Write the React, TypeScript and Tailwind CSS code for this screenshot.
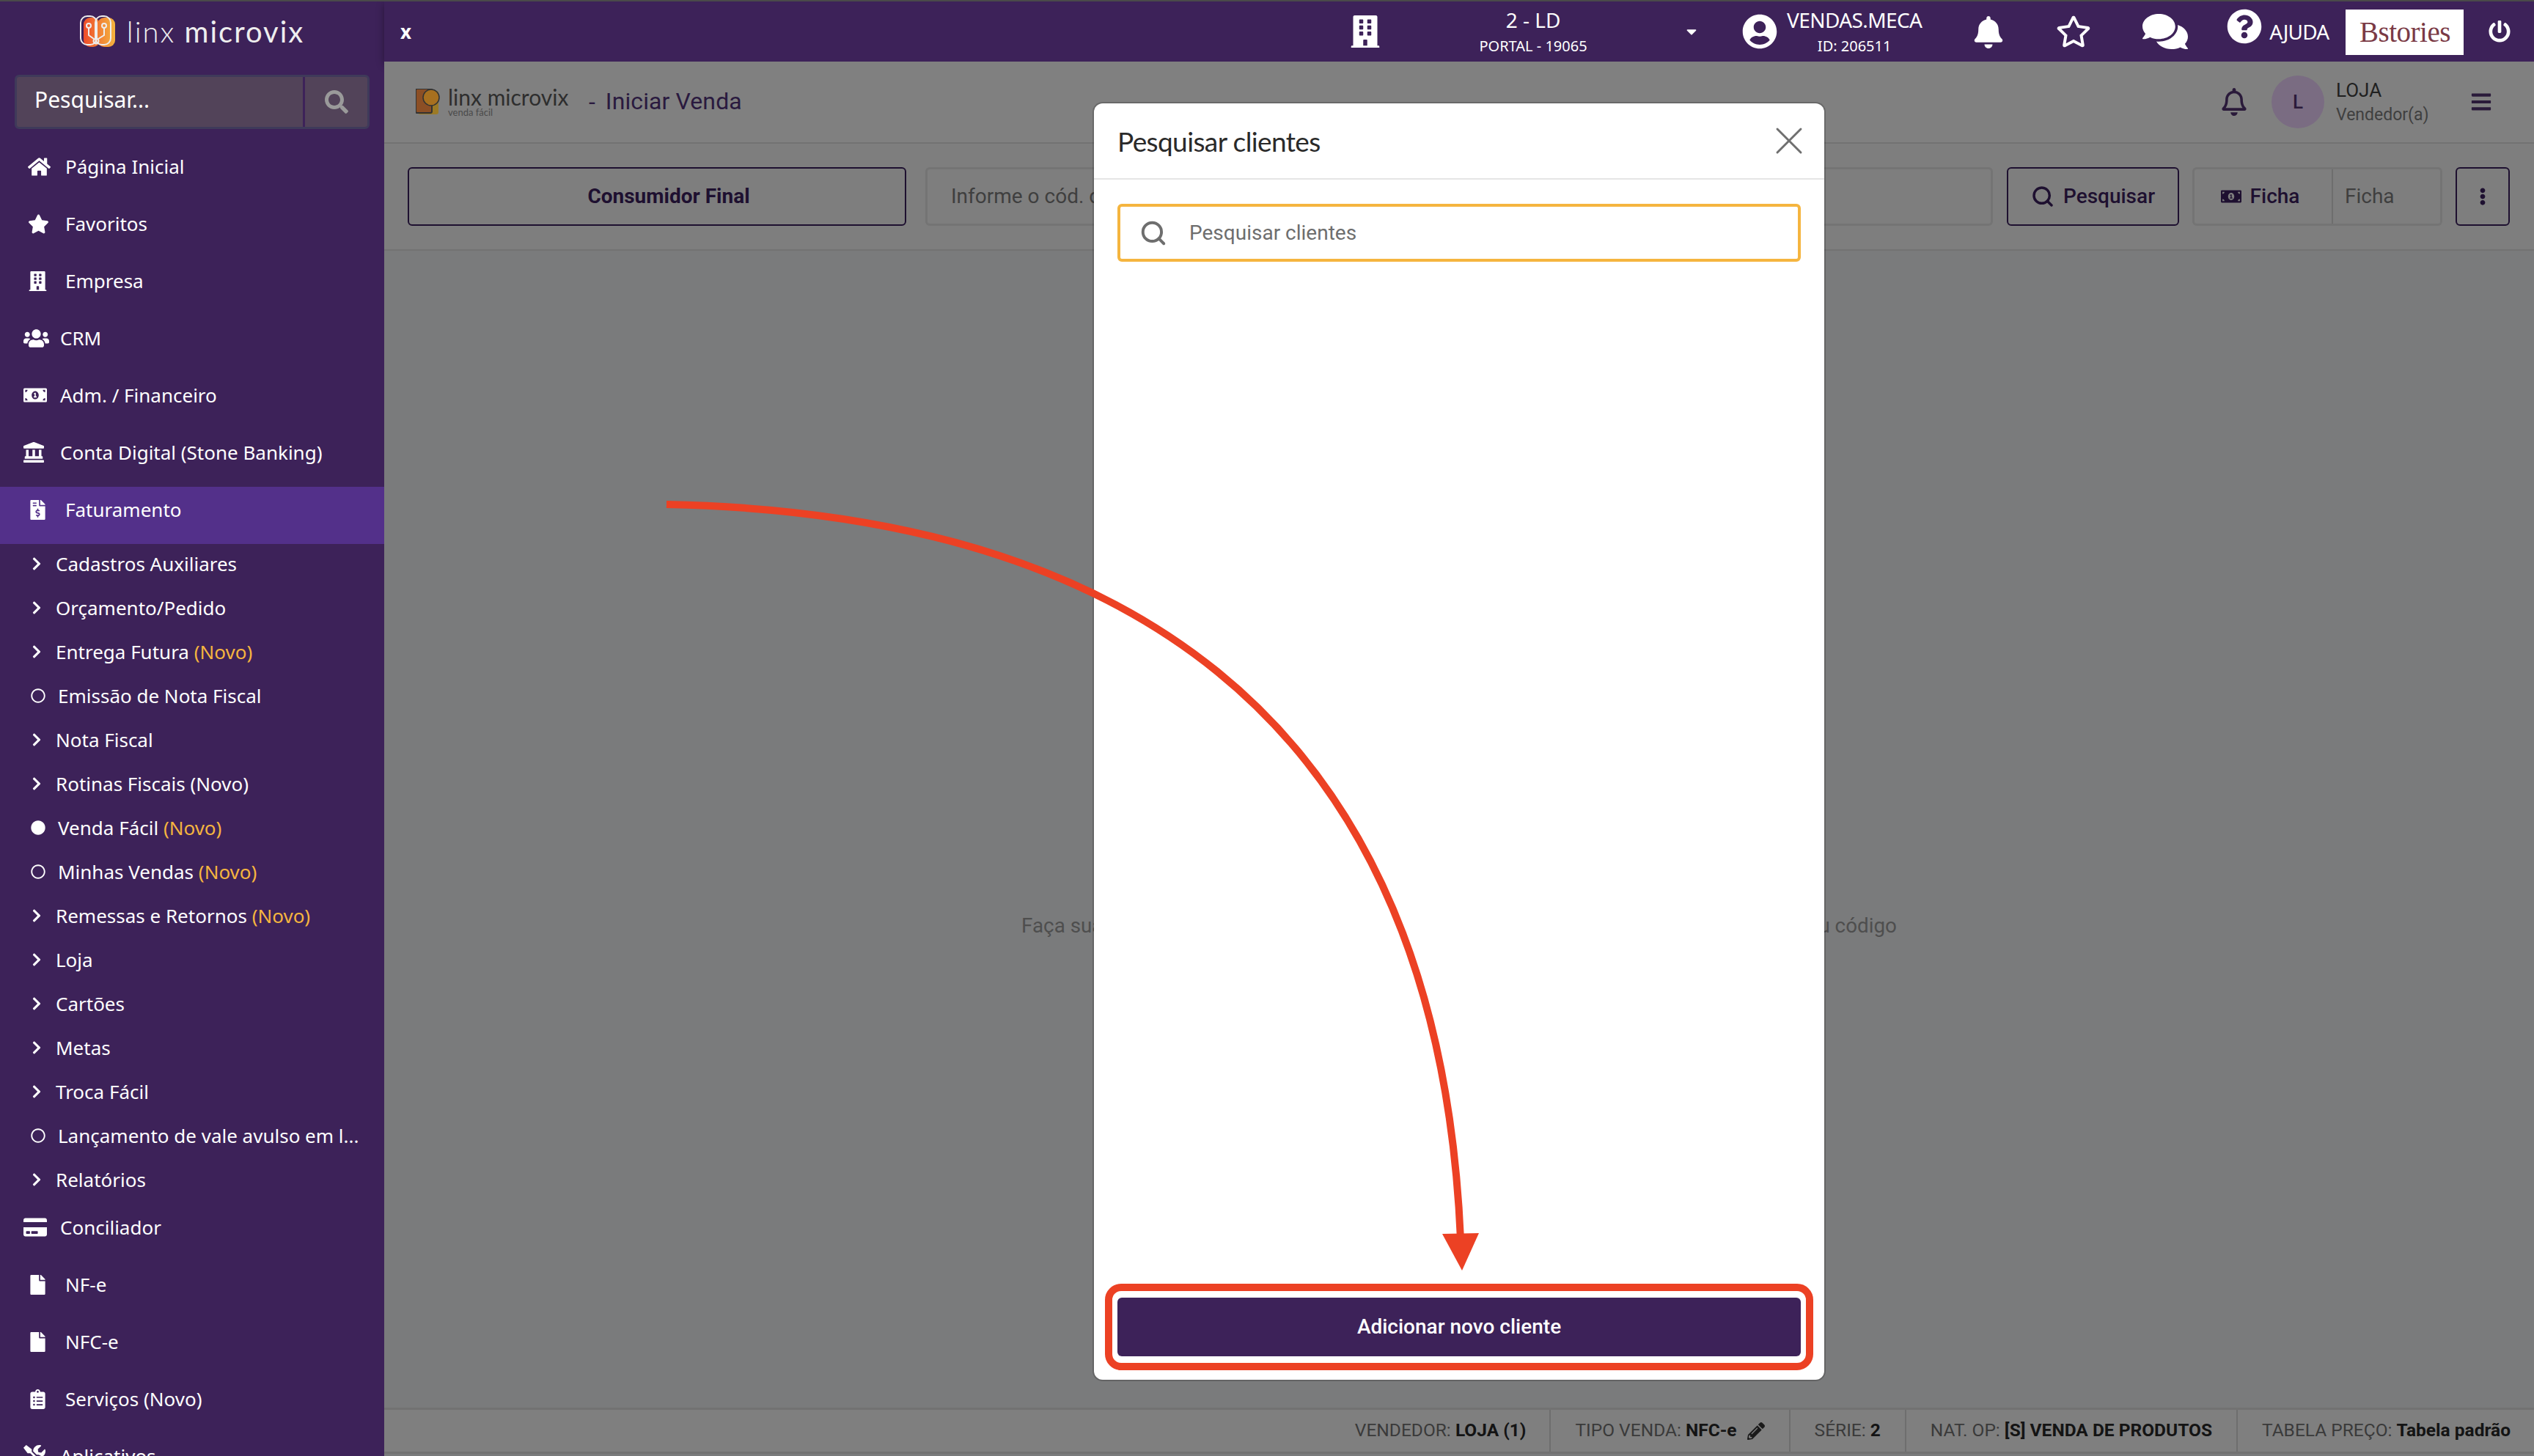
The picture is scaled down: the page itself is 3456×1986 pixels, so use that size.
import {
    FaBell,
    FaBuilding,
    FaChevronRight,
    FaClipboardList,
    FaCreditCard,
    FaFile,
    FaFileInvoiceDollar,
    FaHome,
    FaLandmark,
    FaMoneyBillAlt,
    FaPencilAlt,
    FaRegBell,
    FaRegCircle,
    FaCircle,
    FaRegStar,
    FaSearch,
    FaStar,
    FaTools,
    FaUserCircle,
    FaUsers,
    FaComments,
    FaQuestionCircle,
    FaPowerOff,
    FaCaretDown,
    FaBars,
    FaEllipsisV,
} from 'react-icons/fa'
import { LuSearch, LuX } from 'react-icons/lu'

const sideFont = "font-['Noto_Sans',sans-serif]"

const subItems = [
    { label: 'Cadastros Auxiliares', type: 'arrow' },
    { label: 'Orçamento/Pedido', type: 'arrow' },
    { label: 'Entrega Futura', type: 'arrow', novo: true },
    { label: 'Emissão de Nota Fiscal', type: 'ring' },
    { label: 'Nota Fiscal', type: 'arrow' },
    { label: 'Rotinas Fiscais (Novo)', type: 'arrow' },
    { label: 'Venda Fácil', type: 'dot', novo: true },
    { label: 'Minhas Vendas', type: 'ring', novo: true },
    { label: 'Remessas e Retornos', type: 'arrow', novo: true },
    { label: 'Loja', type: 'arrow' },
    { label: 'Cartões', type: 'arrow' },
    { label: 'Metas', type: 'arrow' },
    { label: 'Troca Fácil', type: 'arrow' },
    { label: 'Lançamento de vale avulso em l...', type: 'ring' },
    { label: 'Relatórios', type: 'arrow' },
]

function MainItem({ icon, label, wide, active }: any) {
    return (
        <div
            className={`flex h-[78px] items-start text-[26px] leading-[36px] text-white ${
                wide ? 'pl-[32px]' : 'pl-[38px]'
            } ${active ? 'mt-[4px] mb-[-3px] bg-[#53308a] pt-[13px]' : 'pt-[17px]'}`}
        >
            <span
                className={`flex h-[36px] items-center ${
                    wide ? 'w-[50px]' : 'w-[51px]'
                }`}
            >
                {icon}
            </span>
            {label}
        </div>
    )
}

function SubItem({ item }: any) {
    return (
        <div className="flex h-[60px] items-center pl-[40px] text-[26px] text-white">
            {item.type === 'arrow' && (
                <span className="flex w-[36px]">
                    <FaChevronRight size={20} />
                </span>
            )}
            {item.type === 'ring' && (
                <span className="ml-[2px] flex w-[37px]">
                    <FaRegCircle size={20} />
                </span>
            )}
            {item.type === 'dot' && (
                <span className="ml-[2px] flex w-[37px]">
                    <FaCircle size={20} />
                </span>
            )}
            <span className="whitespace-nowrap">
                {item.label}
                {item.novo && (
                    <span className="text-[#f5b53f]"> (Novo)</span>
                )}
            </span>
        </div>
    )
}

function Sidebar() {
    return (
        <aside
            className={`h-full w-[524px] shrink-0 overflow-hidden bg-[#3d2259] ${sideFont}`}
        >
            <div className="flex h-[82px] items-center justify-center gap-[16px]">
                <svg width="48" height="44" viewBox="0 0 48 44">
                    <defs>
                        <linearGradient id="lg" gradientUnits="userSpaceOnUse" x1="4" y1="0" x2="48" y2="0">
                            <stop offset="0" stopColor="#ee4a2a" />
                            <stop offset="1" stopColor="#f5b53f" />
                        </linearGradient>
                    </defs>
                    <rect x="5" y="3" width="22" height="40" rx="9" fill="url(#lg)" />
                    <rect x="24" y="3" width="24" height="40" rx="9" fill="url(#lg)" />
                    <g fill="none" stroke="#eee" strokeWidth="2">
                        <rect x="1" y="1" width="22" height="39" rx="9" />
                        <rect x="21" y="1" width="21" height="39" rx="9" />
                        <circle cx="12" cy="14" r="3" />
                        <circle cx="33" cy="14" r="3" />
                        <circle cx="22" cy="35" r="3.5" />
                        <path d="M12 17v10l7 5M33 17v10l-8 5" />
                    </g>
                </svg>
                <span className="text-[40px] leading-none tracking-[2px] text-[#eeeeee] font-['Lato',sans-serif]">
                    <span className="font-light">linx</span>{' '}
                    <span>microvix</span>
                </span>
            </div>
            <div className="mx-[20px] mt-[18px] flex h-[74px] rounded-[6px] border-[3px] border-[#3f3a5a] bg-[#524359]">
                <div className="flex w-[393px] items-center border-r-[3px] border-[#3d2259] pb-[8px] pl-[24px] text-[30px] text-white">
                    Pesquisar...
                </div>
                <div className="flex flex-1 items-center justify-center text-[#9a9a9a]">
                    <FaSearch size={32} />
                </div>
            </div>
            <div className="mt-[16px]">
                <MainItem icon={<FaHome size={31} />} label="Página Inicial" />
                <MainItem icon={<FaStar size={29} />} label="Favoritos" />
                <MainItem icon={<FaBuilding size={27} />} label="Empresa" />
                <MainItem icon={<FaUsers size={35} />} label="CRM" wide />
                <MainItem
                    icon={<FaMoneyBillAlt size={32} />}
                    label="Adm. / Financeiro"
                    wide
                />
                <MainItem
                    icon={<FaLandmark size={28} />}
                    label="Conta Digital (Stone Banking)"
                    wide
                />
                <MainItem
                    icon={<FaFileInvoiceDollar size={27} />}
                    label="Faturamento"
                    active
                />
                <div>
                    {subItems.map((item) => (
                        <SubItem key={item.label} item={item} />
                    ))}
                </div>
                <MainItem
                    icon={<FaCreditCard size={32} />}
                    label="Conciliador"
                    wide
                />
                <MainItem icon={<FaFile size={27} />} label="NF-e" />
                <MainItem icon={<FaFile size={27} />} label="NFC-e" />
                <MainItem
                    icon={<FaClipboardList size={27} />}
                    label="Serviços (Novo)"
                />
                <MainItem icon={<FaTools size={30} />} label="Aplicativos" wide />
            </div>
        </aside>
    )
}

function TopBar() {
    return (
        <header
            className={`flex h-[82px] shrink-0 items-center bg-[#3d2259] text-white shadow-[0_4px_10px_rgba(0,0,0,0.35)] ${sideFont}`}
        >
            <span className="ml-[22px] text-[26px] font-bold">x</span>
            <FaBuilding size={44} className="ml-[1279px]" />
            <div className="ml-[107px] w-[200px] pt-[4px] text-center">
                <div className="text-[28px] leading-[34px]">2 - LD</div>
                <div className="mt-[2px] text-[20px] leading-[34px]">PORTAL - 19065</div>
            </div>
            <FaCaretDown size={22} className="ml-[105px]" />
            <FaUserCircle size={48} className="ml-[58px]" />
            <div className="ml-[13px] pt-[4px] text-center">
                <div className="text-[28px] leading-[34px] tracking-[-0.6px]">
                    VENDAS.MECA
                </div>
                <div className="mt-[2px] text-[20px] leading-[34px]">ID: 206511</div>
            </div>
            <FaBell size={44} className="mt-[2px] ml-[69px]" />
            <FaRegStar size={48} className="ml-[70px]" />
            <FaComments size={62} className="ml-[70px]" />
            <FaQuestionCircle size={48} className="mb-[14px] ml-[53px]" />
            <span className="ml-[10px] text-[28px] tracking-[-0.8px]">AJUDA</span>
            <div className="mt-[2px] ml-[23px] flex h-[62px] w-[161px] items-center justify-center bg-white font-['Liberation_Serif',serif] text-[39px] tracking-[-0.5px] text-[#7a3a45]">
                Bstories
            </div>
            <FaPowerOff size={30} className="ml-[34px]" />
        </header>
    )
}

function PageHeader() {
    return (
        <div className="flex h-[112px] shrink-0 items-center border-b-[2px] border-[#727272] bg-[#808080] pl-[43px]">
            <svg width="34" height="36" viewBox="0 0 34 36">
                <rect x="3" y="3" width="28" height="32" rx="3" fill="#9c7a25" />
                <rect x="0" y="0" width="22" height="33" rx="2" fill="#8c4f25" stroke="#333" strokeWidth="2" />
                <circle cx="21" cy="12" r="11" fill="#a8701f" stroke="#333" strokeWidth="1.5" />
            </svg>
            <div className="ml-[10px] flex w-[170px] flex-col font-['Lato',sans-serif] leading-none text-[#2e2e2e]">
                <span className="text-[30px] leading-[28px]">linx microvix</span>
                <span className="text-[13px] leading-[14px] text-[#4a4a4a]">
                    venda fácil
                </span>
            </div>
            <span className="ml-[22px] text-[32px] text-[#2a1a3f]">-</span>
            <span className="mb-[2px] ml-[14px] text-[32px] tracking-[0.1px] text-[#2a1a3f]">
                Iniciar Venda
            </span>
            <div className="ml-auto flex items-center">
                <FaRegBell size={38} className="text-[#2a1a3a]" />
                <div className="ml-[32px] flex h-[72px] w-[72px] items-center justify-center rounded-full bg-[#7a6c82] text-[26px] font-medium text-[#2a1a3a]">
                    L
                </div>
                <div className="ml-[16px] w-[180px]">
                    <div className="text-[26px] leading-[36px] text-[#1f1f1f]">LOJA</div>
                    <div className="text-[23px] leading-[32px] text-[#3f3f3f]">Vendedor(a)</div>
                </div>
                <FaBars size={30} className="mr-[57px] ml-[3px] text-[#2a1a3a]" />
            </div>
        </div>
    )
}

function ActionRow() {
    return (
        <div className="flex h-[146px] shrink-0 items-center border-b-[2px] border-[#727272] bg-[#7e7e7e] pl-[32px] text-[#1e1030]">
            <button className="h-[80px] w-[680px] rounded-[6px] border-[2px] border-[#1e1030] pl-[32px] text-[28px] font-bold">
                Consumidor Final
            </button>
            <div className="ml-[26px] flex h-[80px] w-[1456px] items-center rounded-[6px] border-[3px] border-[#747474] pl-[32px] text-[28px] text-[#3f3f3f]">
                Informe o cód. de barras ou referência
            </div>
            <button className="ml-[19px] flex h-[80px] w-[235px] items-center justify-center gap-[12px] rounded-[6px] border-[2px] border-[#1e1030] text-[28px] font-medium">
                <LuSearch size={32} strokeWidth={2.6} />
                Pesquisar
            </button>
            <div className="ml-[18px] flex h-[80px] w-[341px] rounded-[6px] border-[3px] border-[#747474]">
                <div className="flex w-[189px] items-center justify-center gap-[12px] border-r-[2px] border-[#6e6e6e] pr-[8px] text-[28px] font-medium">
                    <FaMoneyBillAlt size={28} />
                    Ficha
                </div>
                <div className="flex flex-1 items-center pl-[16px] text-[28px] text-[#3f3f3f]">
                    Ficha
                </div>
            </div>
            <button className="ml-[18px] flex h-[80px] w-[74px] items-center justify-center rounded-[6px] border-[2px] border-[#1e1030]">
                <FaEllipsisV size={24} />
            </button>
        </div>
    )
}

function Footer() {
    const cell = 'flex h-full items-center whitespace-nowrap border-r-[2px] border-[#6e6e6e] text-[24.5px] text-[#3a3a3a]'
    return (
        <div className="flex h-[63px] shrink-0 justify-end border-y-[3px] border-[#727272] bg-[#7f7f7f]">
            <div className={`${cell} pr-[32px]`}>
                VENDEDOR:&nbsp;<b className="font-bold text-[#141414]">LOJA (1)</b>
            </div>
            <div className={`${cell} gap-[8px] px-[33px]`}>
                <span>
                    TIPO VENDA:&nbsp;<b className="font-bold text-[#141414]">NFC-e</b>
                </span>
                <FaPencilAlt size={24} className="ml-[6px] text-[#1a1a1a]" />
            </div>
            <div className={`${cell} px-[33px]`}>
                SÉRIE:&nbsp;<b className="font-bold text-[#141414]">2</b>
            </div>
            <div className={`${cell} px-[33px]`}>
                NAT. OP:&nbsp;<b className="font-bold text-[#141414]">[S] VENDA DE PRODUTOS</b>
            </div>
            <div className="flex h-full items-center whitespace-nowrap pr-[32px] pl-[33px] text-[24.5px] text-[#3a3a3a]">
                TABELA PREÇO:&nbsp;<b className="font-bold text-[#141414]">Tabela padrão</b>
            </div>
        </div>
    )
}

function Modal() {
    return (
        <div className="absolute top-[139px] left-[1492px] flex h-[1741px] w-[996px] flex-col rounded-[12px] bg-white font-['Roboto',sans-serif] shadow-[0_0_0_2px_rgba(0,0,0,0.18)]">
            <div className="flex h-[104px] shrink-0 items-center justify-between border-b-[2px] border-[#e5e5e5] pr-[16px] pl-[32px]">
                <span className="mt-[2px] text-[37px] tracking-[-0.6px] text-[#2a2a2a] font-['Lato',sans-serif]">
                    Pesquisar clientes
                </span>
                <LuX size={64} strokeWidth={1.1} className="text-[#6f6f6f]" />
            </div>
            <div className="mx-[32px] mt-[33px] flex h-[79px] items-center rounded-[6px] border-[4px] border-[#f5b53f] pl-[26px] text-[28px] text-[#6e6e6e]">
                <LuSearch size={38} strokeWidth={2.5} className="text-[#6e6e6e]" />
                <span className="ml-[30px]">Pesquisar clientes</span>
            </div>
            <div className="flex-1" />
            <div className="relative mx-[32px] mb-[32px] flex h-[80px] items-center justify-center rounded-[6px] bg-[#3d2259] text-[28px] font-medium text-white">
                Adicionar novo cliente
                <div className="absolute -inset-x-[17px] -inset-y-[19px] rounded-[22px] border-[10px] border-[#ec4124]" />
            </div>
        </div>
    )
}

export default function App() {
    return (
        <div className="relative h-[1986px] w-[3456px] overflow-hidden border-t-[2px] border-[#4a4a4a] bg-[#7a7b7c] font-['Roboto',sans-serif]">
            <div className="flex h-full">
                <Sidebar />
                <main className="flex min-w-0 flex-1 flex-col pb-[3px]">
                    <TopBar />
                    <PageHeader />
                    <ActionRow />
                    <div className="flex flex-1 items-center justify-center pt-[264px]">
                        <span className="text-[27.8px] whitespace-nowrap text-[#4e4e4e]">
                            Faça sua busca de produtos pelo nome, descrição, marca, referência, código de barras ou código
                        </span>
                    </div>
                    <Footer />
                </main>
            </div>
            <Modal />
            <svg
                className="pointer-events-none absolute -top-[2px] left-0"
                width="3456"
                height="1986"
                viewBox="0 0 3456 1986"
                fill="none"
            >
                <path
                    d="M909 688 C1500 700 1960 950 1992 1690"
                    stroke="#ec4124"
                    strokeWidth="10"
                />
                <polygon points="1967,1683 2017,1682 1994,1733" fill="#ec4124" />
            </svg>
        </div>
    )
}
